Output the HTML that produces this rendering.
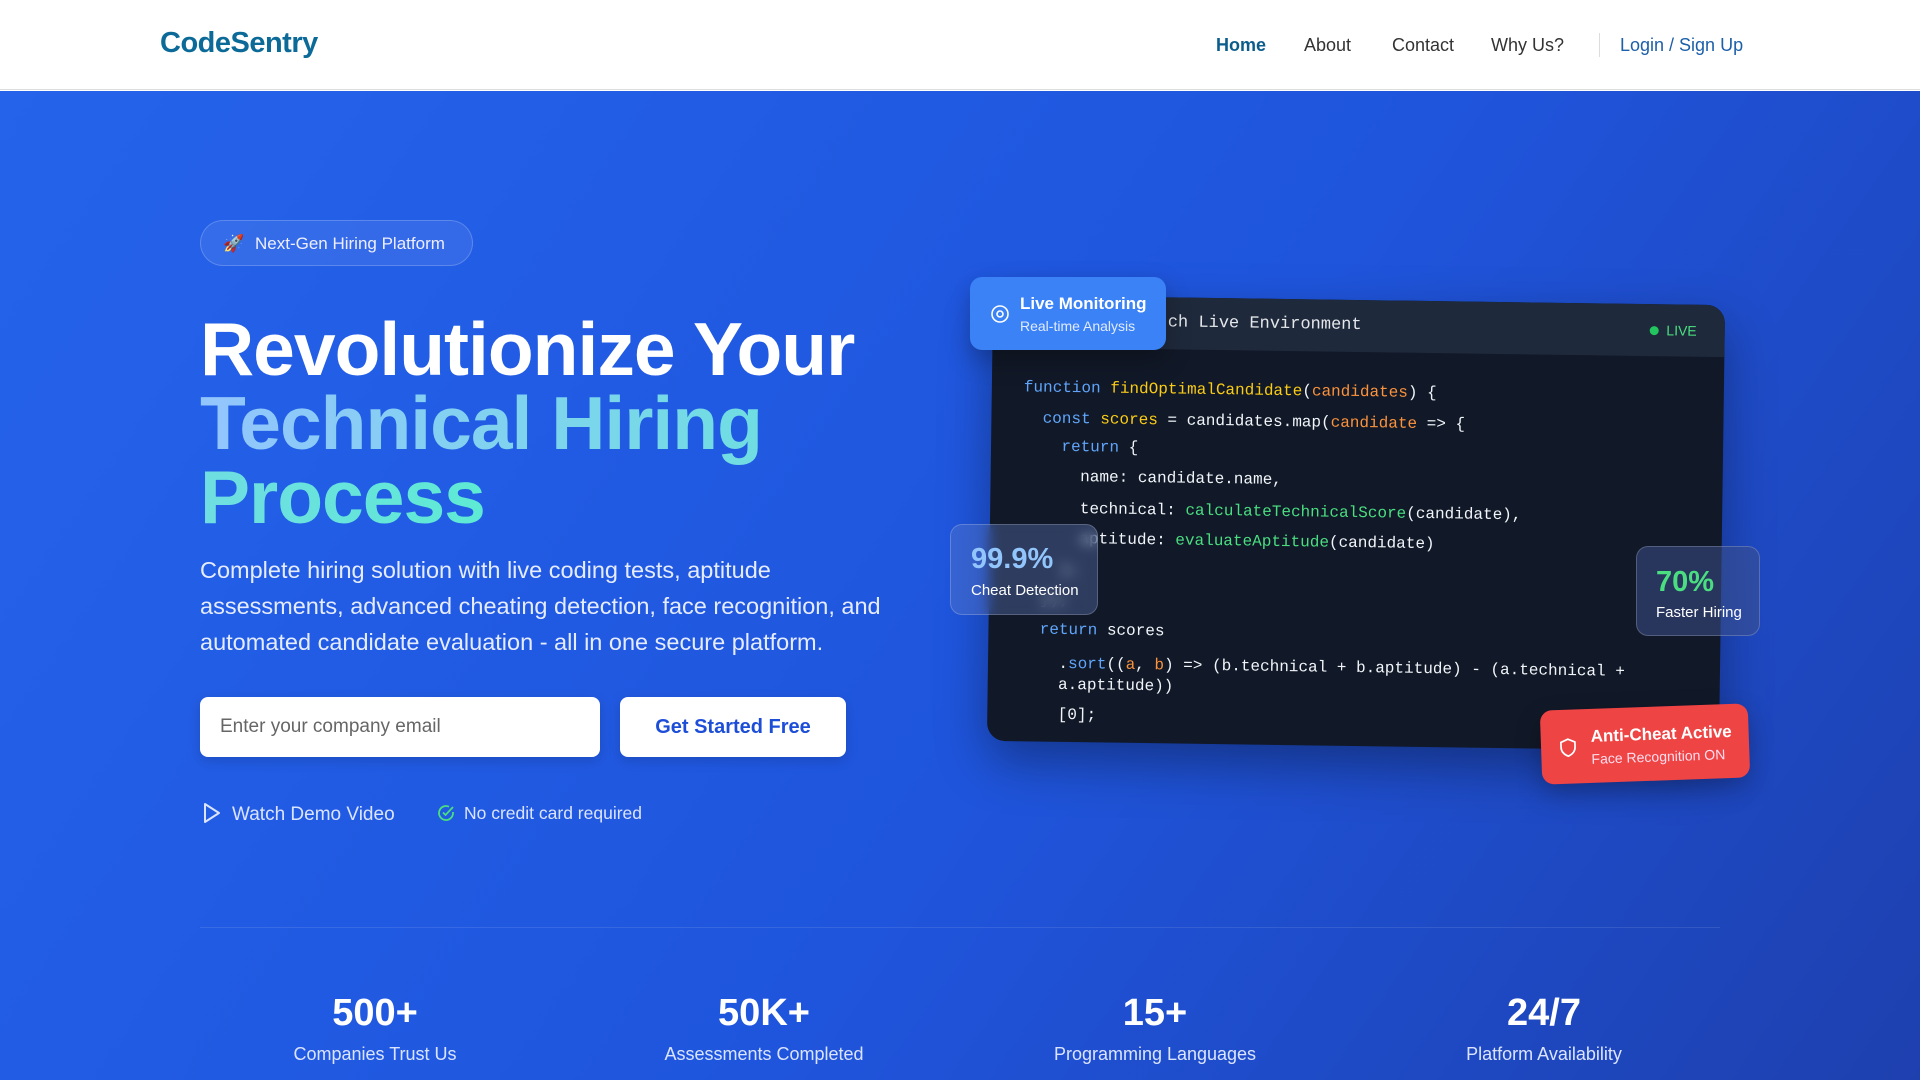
<!DOCTYPE html>
<html><head><meta charset="utf-8">
<style>
*{margin:0;padding:0;box-sizing:border-box}
html,body{width:1920px;height:1080px;overflow:hidden;font-family:"Liberation Sans",sans-serif}
.nav{position:absolute;left:0;top:0;width:1920px;height:90px;background:#fff;border-bottom:1px solid #ddd}
.logo{position:absolute;left:160px;top:27px;font-size:29px;font-weight:bold;color:#0b6a97;letter-spacing:-0.5px}
.nav a{position:absolute;top:35px;font-size:18px;color:#333;text-decoration:none}
.hero{position:absolute;left:0;top:91px;width:1920px;height:989px;background:linear-gradient(125deg,#2563eb 0%,#1f55dd 55%,#1e40af 100%)}
.badge{position:absolute;left:200px;top:220px;width:273px;height:46px;border-radius:23px;background:rgba(255,255,255,.08);border:1px solid rgba(255,255,255,.2);color:#eef;font-size:17px;line-height:46px;padding-left:54px}
h1{position:absolute;left:200px;top:312px;font-size:75px;line-height:74px;font-weight:bold;color:#fff;letter-spacing:-1px}
h1 .g{background:linear-gradient(90deg,#93c5fd,#5eead4);-webkit-background-clip:text;color:transparent}
.p{position:absolute;left:200px;top:552px;width:712px;font-size:23.5px;line-height:36px;color:#e6ecff}
.inp{position:absolute;left:200px;top:697px;width:400px;height:60px;background:#fff;border-radius:8px;font-size:19px;color:#666;line-height:60px;padding-left:20px;box-shadow:0 4px 12px rgba(0,0,0,.15)}
.btn{position:absolute;left:620px;top:697px;width:226px;height:60px;background:#fff;border-radius:8px;font-size:20px;font-weight:bold;color:#1d4ed8;line-height:60px;text-align:center;box-shadow:0 4px 12px rgba(0,0,0,.15)}
.sm{position:absolute;top:802px;font-size:19px;color:#dbe4ff}
.line{position:absolute;left:200px;top:927px;width:1520px;height:1px;background:rgba(255,255,255,.1)}
.st{position:absolute;top:990px;width:300px;text-align:center;color:#fff}
.st b{display:block;font-size:38px;line-height:46px}
.st span{display:block;font-size:18px;color:#dbe4ff;margin-top:8px}
.card{position:absolute;left:990px;top:300px;width:732px;height:446px;background:#111827;border-radius:18px;transform:rotate(0.8deg);box-shadow:0 20px 50px rgba(0,0,0,.35);overflow:hidden}
.ch{height:52px;background:#1e293b;color:#e5e7eb;font-family:"Liberation Mono",monospace;font-size:17px;line-height:52px;padding-left:175px;position:relative}
.live{position:absolute;right:28px;top:0;font-family:"Liberation Sans",sans-serif;font-size:14px;color:#4ade80}
.live:before{content:"";display:inline-block;width:9px;height:9px;border-radius:50%;background:#22c55e;margin-right:8px}
.c{position:absolute;font-family:"Liberation Mono",monospace;font-size:16px;line-height:20px;color:#f1f5f9;white-space:pre}
.k{color:#60a5fa}.f{color:#facc15}.o{color:#fb923c}.gr{color:#4ade80}
.fl{position:absolute;border-radius:12px}
</style></head><body>
<div class="nav">
<div class="logo">CodeSentry</div>
<a style="left:1216px;color:#0b5d8c;font-weight:bold">Home</a>
<a style="left:1304px">About</a>
<a style="left:1392px">Contact</a>
<a style="left:1491px">Why Us?</a>
<div style="position:absolute;left:1599px;top:33px;width:1px;height:24px;background:#ddd"></div>
<a style="left:1620px;color:#1d5fa8">Login / Sign Up</a>
</div>
<div class="hero"></div>
<div class="badge"><span style="position:absolute;left:22px;top:0;font-size:17px">🚀</span>Next-Gen Hiring Platform</div>
<h1>Revolutionize Your<br><span class="g">Technical Hiring<br>Process</span></h1>
<div class="p">Complete hiring solution with live coding tests, aptitude assessments, advanced cheating detection, face recognition, and automated candidate evaluation - all in one secure platform.</div>
<div class="inp">Enter your company email</div>
<div class="btn">Get Started Free</div>
<div class="sm" style="left:202px"><svg width="20" height="22" viewBox="0 0 20 22" style="vertical-align:-4px;margin-right:10px"><path d="M3 2 L17 11 L3 20 Z" fill="none" stroke="#dbe4ff" stroke-width="2" stroke-linejoin="round"/></svg>Watch Demo Video</div>
<div class="sm" style="left:436px;font-size:17.5px;top:803px"><svg width="20" height="20" viewBox="0 0 20 20" style="vertical-align:-4px;margin-right:8px"><path d="M17 9v1a7 7 0 1 1-4-6.3" fill="none" stroke="#4ade80" stroke-width="1.8"/><path d="M7 9.5l2.5 2.5L17 4" fill="none" stroke="#4ade80" stroke-width="1.8"/></svg>No credit card required</div>
<div class="line"></div>
<div class="st" style="left:225px"><b>500+</b><span>Companies Trust Us</span></div>
<div class="st" style="left:614px"><b>50K+</b><span>Assessments Completed</span></div>
<div class="st" style="left:1005px"><b>15+</b><span>Programming Languages</span></div>
<div class="st" style="left:1394px"><b>24/7</b><span>Platform Availability</span></div>

<div class="card">
<div class="ch">ch Live Environment<span class="live">LIVE</span></div>
<div class="c" style="left:32px;top:82px"><span class="k">function</span> <span class="f">findOptimalCandidate</span>(<span class="o">candidates</span>) {</div>
<div class="c" style="left:32px;top:113px">  <span class="k">const</span> <span class="f">scores</span> = candidates.map(<span class="o">candidate</span> => {</div>
<div class="c" style="left:32px;top:141px">    <span class="k">return</span> {</div>
<div class="c" style="left:32px;top:171px">      name: candidate.name,</div>
<div class="c" style="left:32px;top:203px">      technical: <span class="gr">calculateTechnicalScore</span>(candidate),</div>
<div class="c" style="left:32px;top:233px">      aptitude: <span class="gr">evaluateAptitude</span>(candidate)</div>
<div class="c" style="left:32px;top:264px">    };</div>
<div class="c" style="left:32px;top:294px">  });</div>
<div class="c" style="left:32px;top:324px">  <span class="k">return</span> scores</div>
<div class="c" style="left:32px;top:358px">    .<span class="k">sort</span>((<span class="o">a</span>, <span class="o">b</span>) => (b.technical + b.aptitude) - (a.technical +</div>
<div class="c" style="left:32px;top:379px">    a.aptitude))</div>
<div class="c" style="left:32px;top:409px">    [0];</div>
</div>

<div class="fl" style="left:970px;top:277px;width:196px;height:73px;background:#3b82f6;color:#fff;box-shadow:0 10px 25px rgba(0,0,0,.25)">
<svg width="20" height="20" viewBox="0 0 20 20" style="position:absolute;left:20px;top:27px"><circle cx="10" cy="10" r="8" fill="none" stroke="#fff" stroke-width="1.6"/><circle cx="10" cy="10" r="3" fill="none" stroke="#fff" stroke-width="1.6"/></svg>
<div style="position:absolute;left:50px;top:17px;font-size:17px;font-weight:bold">Live Monitoring</div>
<div style="position:absolute;left:50px;top:41px;font-size:14px;color:#e0ebff">Real-time Analysis</div></div>

<div class="fl" style="left:950px;top:524px;width:148px;height:91px;background:rgba(100,130,200,.35);border:1px solid rgba(255,255,255,.2);backdrop-filter:blur(6px)">
<div style="position:absolute;left:20px;top:18px;font-size:29px;font-weight:bold;color:#93c5fd">99.9%</div>
<div style="position:absolute;left:20px;top:57px;font-size:15px;color:#fff">Cheat Detection</div></div>

<div class="fl" style="left:1636px;top:546px;width:124px;height:90px;background:rgba(60,80,140,.55);border:1px solid rgba(255,255,255,.2)">
<div style="position:absolute;left:19px;top:19px;font-size:29px;font-weight:bold;color:#4ade80">70%</div>
<div style="position:absolute;left:19px;top:57px;font-size:15px;color:#fff">Faster Hiring</div></div>

<div class="fl" style="left:1541px;top:707px;width:208px;height:74px;background:#ef4444;color:#fff;transform:rotate(-2deg);box-shadow:0 10px 25px rgba(0,0,0,.25)">
<svg width="18" height="20" viewBox="0 0 18 20" style="position:absolute;left:18px;top:28px"><path d="M9 1.5 L16 4.5 V9.5 C16 14 12.5 17 9 18.5 C5.5 17 2 14 2 9.5 V4.5 Z" fill="none" stroke="#fff" stroke-width="1.7"/></svg>
<div style="position:absolute;left:50px;top:18px;font-size:17px;font-weight:bold">Anti-Cheat Active</div>
<div style="position:absolute;left:50px;top:42px;font-size:14px;color:#fde">Face Recognition ON</div></div>
</body></html>
